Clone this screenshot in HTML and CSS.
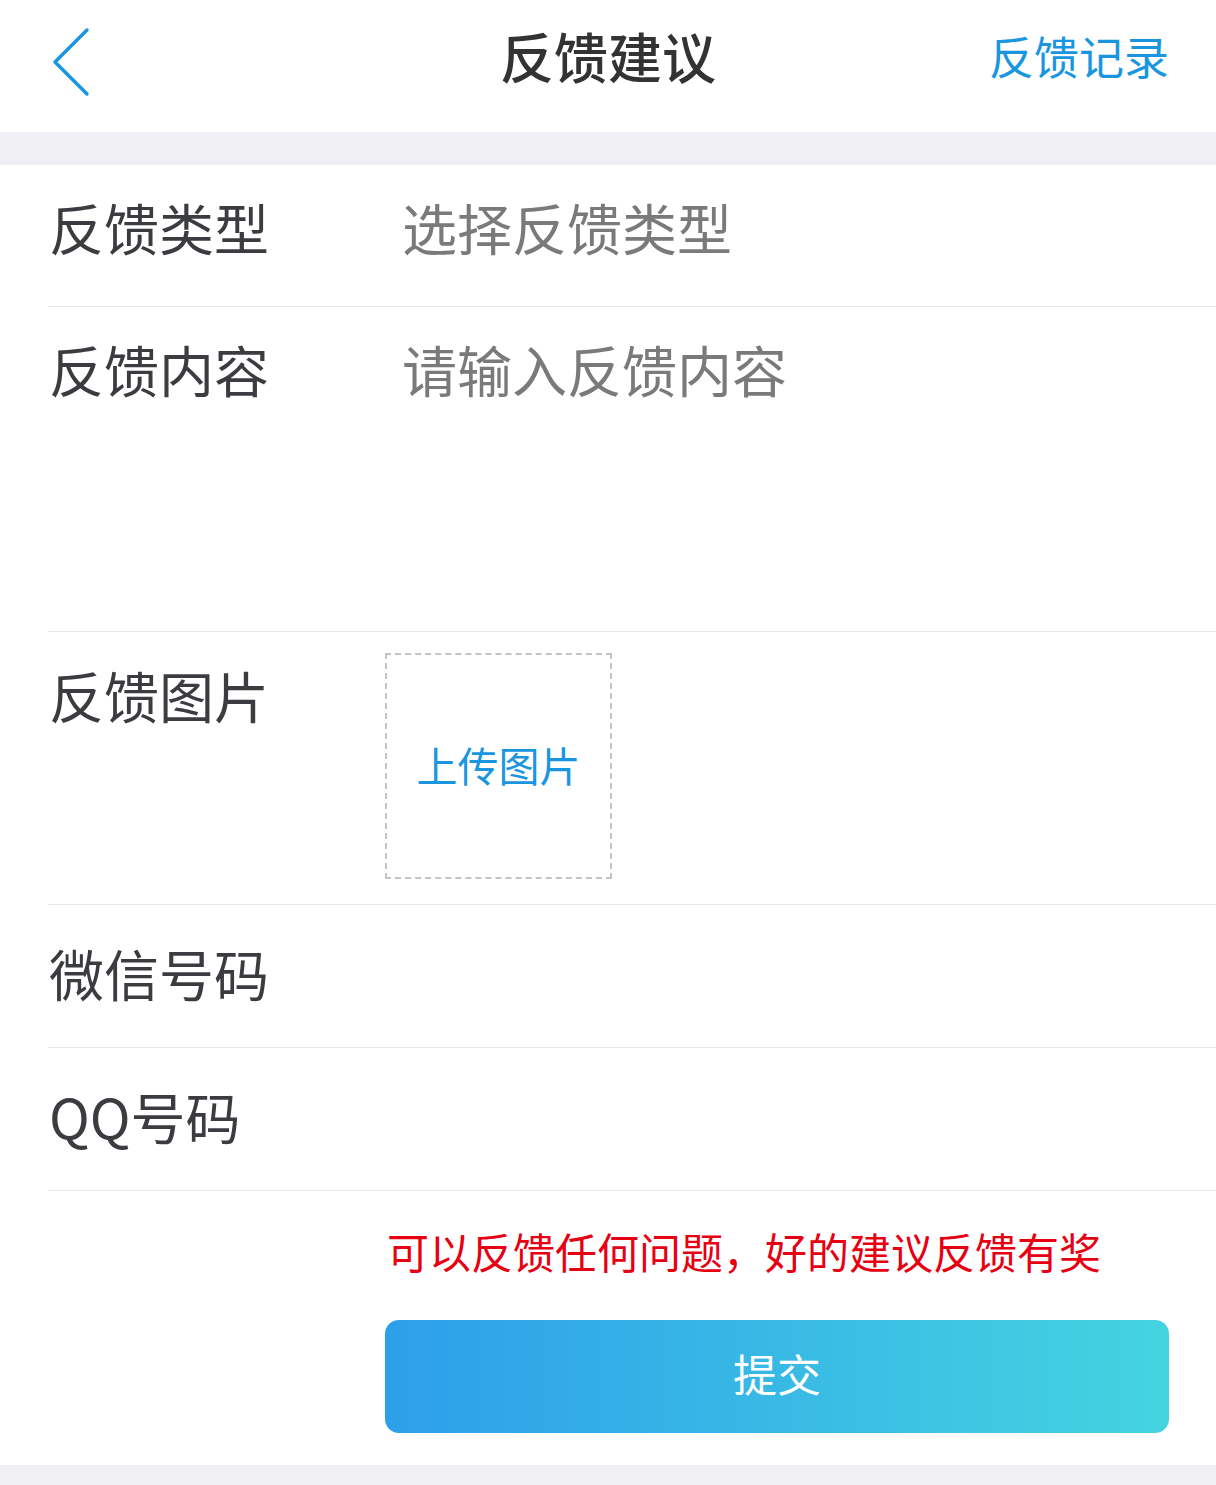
FILE: index.html
```html
<!DOCTYPE html>
<html lang="zh-CN">
<head>
    <meta charset="UTF-8">
    <meta name="viewport" content="width=device-width, initial-scale=1.0">
    <title>反馈建议</title>
    <link rel="stylesheet" href="styles.css">
</head>
<body>
    <div class="header">
        <a class="back" href="#">
            <svg width="40" height="70" viewBox="0 0 40 70">
                <polyline points="35,3 3,35 35,67" fill="none" stroke="#1a96e0" stroke-width="3.5" stroke-linecap="round" stroke-linejoin="round"/>
            </svg>
        </a>
        <h1>反馈建议</h1>
        <a class="record" href="#">反馈记录</a>
    </div>
    <div class="gap"></div>

    <div class="form">
        <div class="row row-type">
            <label>反馈类型</label>
            <div class="placeholder">选择反馈类型</div>
        </div>
        <div class="row row-content">
            <label>反馈内容</label>
            <div class="placeholder">请输入反馈内容</div>
        </div>
        <div class="row row-image">
            <label>反馈图片</label>
            <div class="upload">上传图片</div>
        </div>
        <div class="row row-plain">
            <label>微信号码</label>
        </div>
        <div class="row row-plain">
            <label>QQ号码</label>
        </div>
    </div>

    <div class="footer">
        <p class="tip">可以反馈任何问题，好的建议反馈有奖</p>
        <button id="submitBtn">提交</button>
    </div>
    <div class="gap bottom"></div>
</body>
</html>
```

FILE: styles.css
```css
body {
    margin: 0;
    background: #fff;
    font-family: "Noto Sans CJK SC", "Noto Sans", sans-serif;
    color: #3a3c40;
}
.header {
    height: 132px;
    display: flex;
    align-items: center;
    justify-content: space-between;
    padding: 0 47px 0 52px;
    position: relative;
}
.back {
    display: flex;
    width: 40px;
    height: 70px;
    margin-top: -9px;
}
.header h1 {
    position: absolute;
    left: 0;
    right: 0;
    top: 0;
    margin: 0;
    line-height: 112px;
    text-align: center;
    font-size: 54px;
    font-weight: 500;
    color: #333;
    pointer-events: none;
}
.record {
    font-size: 45px;
    color: #1a96e0;
    text-decoration: none;
    line-height: 1;
    margin-top: -22px;
}
.gap {
    height: 33px;
    background: #efeff4;
}
.gap.bottom {
    height: 20px;
    margin-top: 32px;
}
.form {
    margin-left: 48px;
}
.row {
    display: flex;
    align-items: flex-start;
    border-bottom: 1px solid #e8e8e8;
    box-sizing: border-box;
}
.row label {
    width: 337px;
    flex-shrink: 0;
    font-size: 55px;
    line-height: 1;
    padding-left: 1px;
    box-sizing: border-box;
}
.placeholder {
    font-size: 55px;
    line-height: 1;
    color: #7a7a7a;
    padding-left: 17px;
}
.row-type {
    height: 142px;
    padding-top: 34px;
}
.row-content {
    height: 325px;
    padding-top: 34px;
}
.row-image {
    height: 273px;
    padding-top: 21px;
}
.row-image label {
    margin-top: 14px;
}
.upload {
    width: 227px;
    height: 226px;
    box-sizing: border-box;
    border: 2px dashed #c4c4c4;
    display: flex;
    align-items: center;
    justify-content: center;
    font-size: 41px;
    color: #1a96e0;
    padding-bottom: 4px;
}
.row-plain {
    height: 143px;
    align-items: center;
    padding-bottom: 8px;
}
.footer {
    padding: 39px 47px 0 385px;
}
.tip {
    margin: 0;
    font-size: 42px;
    line-height: 1;
    color: #e60012;
    padding-left: 2px;
}
button {
    display: block;
    width: 100%;
    height: 113px;
    margin-top: 48px;
    padding-bottom: 8px;
    border: none;
    border-radius: 14px;
    background: linear-gradient(90deg, #2d9fea, #44d4e0);
    color: #fff;
    font-family: inherit;
    font-size: 44px;
    cursor: pointer;
}
```
